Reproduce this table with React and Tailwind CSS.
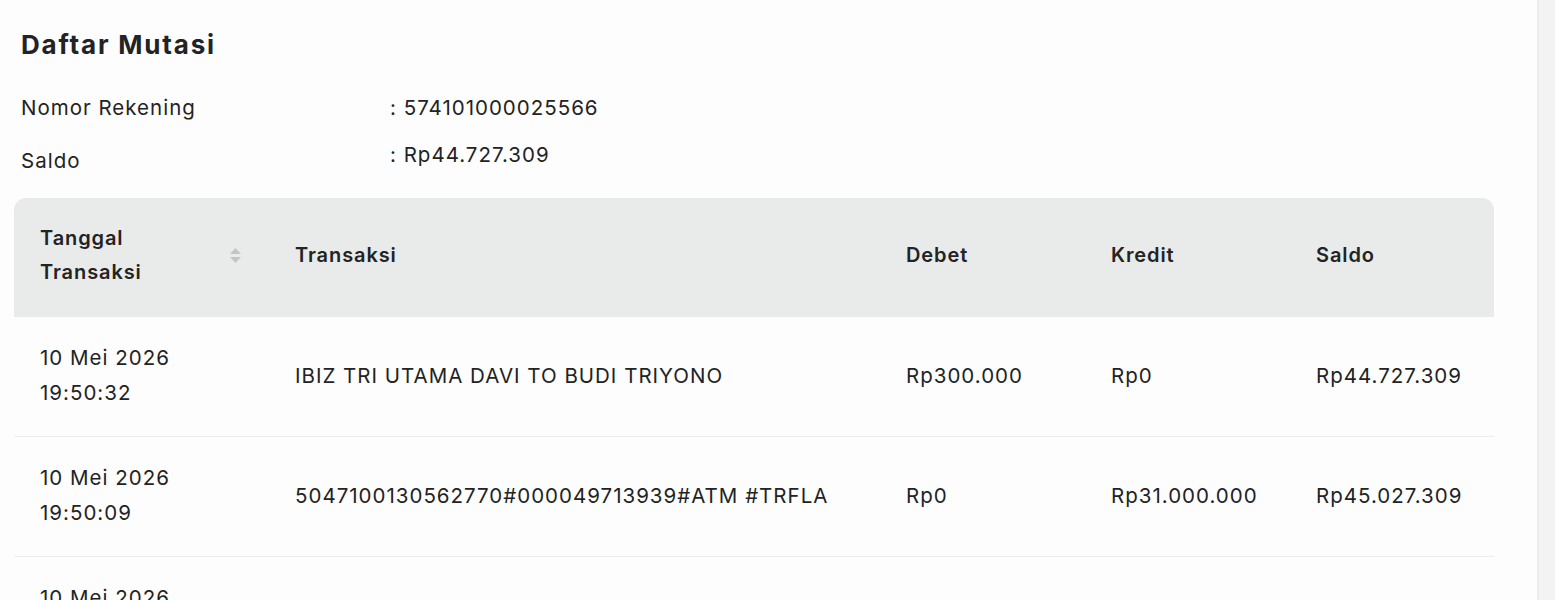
import React from "react";

const ROWS = [
	{
		date: "10 Mei 2026",
		time: "19:50:32",
		desc: "IBIZ TRI UTAMA DAVI TO BUDI TRIYONO",
		debet: "Rp300.000",
		kredit: "Rp0",
		saldo: "Rp44.727.309",
	},
	{
		date: "10 Mei 2026",
		time: "19:50:09",
		desc: "5047100130562770#000049713939#ATM #TRFLA",
		debet: "Rp0",
		kredit: "Rp31.000.000",
		saldo: "Rp45.027.309",
	},
	{
		date: "10 Mei 2026",
		time: "19:49:51",
		desc: "",
		debet: "",
		kredit: "",
		saldo: "",
	},
];

const SortIcon = () => (
	<svg width="13" height="20" viewBox="0 0 13 20" className="shrink-0">
		<path d="M6.5 3 L12 9 H1 Z" fill="#c3c5c7" />
		<path d="M6.5 18 L1 12 H12 Z" fill="#c3c5c7" />
	</svg>
);

const App = () => {
	return (
		<div
			className="flex h-[600px] w-full overflow-hidden bg-[#fdfdfd] text-[#222324]"
			style={{ fontFamily: "Inter, 'Noto Sans', sans-serif" }}
		>
			<div className="flex-1 pl-[14px] pr-[43px]">
				<h1 className="pl-[7px] pt-[29px] text-[26px] font-bold leading-[32px] tracking-[1.8px]">
					Daftar Mutasi
				</h1>

				{/* Account info */}
				<div className="mt-[33px] pl-[7px] text-[20.5px] leading-[28px] tracking-[1px]">
					<div className="flex">
						<span className="w-[369px]">Nomor Rekening</span>
						<span>: 574101000025566</span>
					</div>
					<div className="mt-[19px] flex">
						<span className="w-[369px] pt-[6px]">Saldo</span>
						<span>: Rp44.727.309</span>
					</div>
				</div>

				{/* Table */}
				<div className="mt-[23px]">
					<div className="flex h-[119px] items-center rounded-t-[12px] bg-[#e9eaea] pb-[5px] text-[20px] font-semibold leading-[34px] tracking-[0.9px]">
						<div className="flex w-[281px] items-center pl-[26px] pr-[53px]">
							<div className="flex-1">
								Tanggal
								<br />
								Transaksi
							</div>
							<SortIcon />
						</div>
						<div className="w-[611px]">Transaksi</div>
						<div className="w-[205px]">Debet</div>
						<div className="w-[205px]">Kredit</div>
						<div className="flex-1">Saldo</div>
					</div>

					{ROWS.map((row, i) => (
						<div
							key={i}
							className="flex h-[120px] items-center border-b-[1.5px] border-[#ececec] pb-[3px] text-[20.5px] leading-[35px] tracking-[1px]"
						>
							<div className="w-[281px] pl-[26px]">
								{row.date}
								<br />
								{row.time}
							</div>
							<div className="w-[611px]">{row.desc}</div>
							<div className="w-[205px]">{row.debet}</div>
							<div className="w-[205px]">{row.kredit}</div>
							<div className="flex-1">{row.saldo}</div>
						</div>
					))}
				</div>
			</div>

			{/* Right gutter */}
			<div className="w-[18px] border-l-[2px] border-[#ececec] bg-[#f3f3f3]" />
		</div>
	);
};

export default App;
